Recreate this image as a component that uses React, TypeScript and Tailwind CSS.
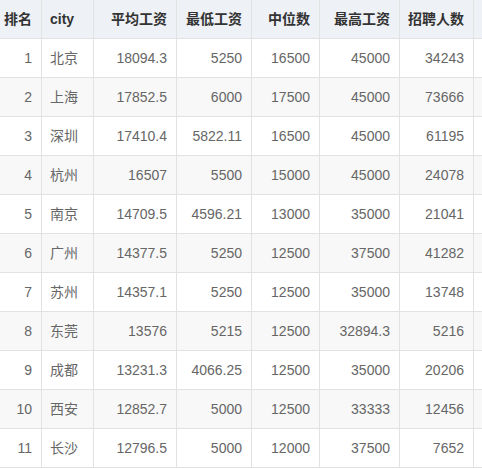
import React from "react";

const headers = ["排名", "city", "平均工资", "最低工资", "中位数", "最高工资", "招聘人数"];

const rows: (string | number)[][] = [
  [1, "北京", "18094.3", 5250, 16500, 45000, 34243],
  [2, "上海", "17852.5", 6000, 17500, 45000, 73666],
  [3, "深圳", "17410.4", "5822.11", 16500, 45000, 61195],
  [4, "杭州", "16507", 5500, 15000, 45000, 24078],
  [5, "南京", "14709.5", "4596.21", 13000, 35000, 21041],
  [6, "广州", "14377.5", 5250, 12500, 37500, 41282],
  [7, "苏州", "14357.1", 5250, 12500, 35000, 13748],
  [8, "东莞", "13576", 5215, 12500, "32894.3", 5216],
  [9, "成都", "13231.3", "4066.25", 12500, 35000, 20206],
  [10, "西安", "12852.7", 5000, 12500, 33333, 12456],
  [11, "长沙", "12796.5", 5000, 12000, 37500, 7652],
];

const grid = "grid grid-cols-[42px_52px_83px_75px_68px_80px_74px_1fr]";
const font = { fontFamily: '"Liberation Sans", "Noto Sans CJK SC", sans-serif' };

function Cell({ children, left }: { children?: React.ReactNode; left?: boolean }) {
  return (
    <div
      className={`h-[39px] border-r border-b border-[#e2e2e2] flex items-center ${
        left ? "justify-start pl-[8px]" : "justify-end pr-[9px]"
      }`}
    >
      {children}
    </div>
  );
}

export default function App() {
  return (
    <div className="w-[482px] h-[468px] overflow-hidden bg-white text-[14px]" style={font}>
      <div className={`${grid} bg-[#eef1f6] text-[#333] font-bold`}>
        {headers.map((h, i) => (
          <Cell key={h} left={i === 1}>
            {h}
          </Cell>
        ))}
        <Cell />
      </div>
      {rows.map((r, idx) => (
        <div
          key={idx}
          className={`${grid} text-[#666] ${idx % 2 === 1 ? "bg-[#f8f8f8]" : "bg-white"}`}
        >
          {r.map((v, i) => (
            <Cell key={i} left={i === 1}>
              {v}
            </Cell>
          ))}
          <Cell />
        </div>
      ))}
    </div>
  );
}
